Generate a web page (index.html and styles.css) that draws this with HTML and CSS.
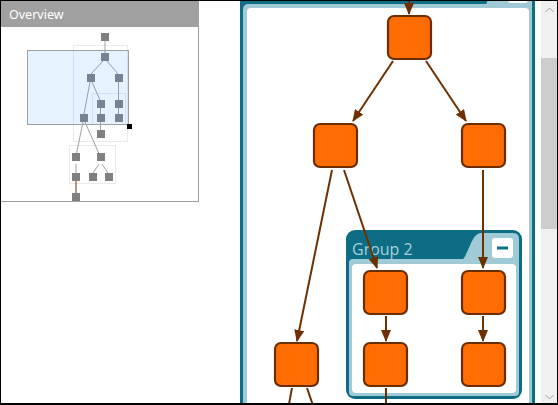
FILE: index.html
```html
<!DOCTYPE html>
<html>
<head>
<meta charset="utf-8">
<link rel="stylesheet" href="styles.css">
</head>
<body>
<div class="window">
  <div class="canvas">
    <svg class="diagram" viewBox="1 1 540 402" width="540" height="402">
      <defs>
        <marker id="arr" viewBox="0 0 12 10" refX="11" refY="5" markerWidth="12" markerHeight="10" markerUnits="userSpaceOnUse" orient="auto">
          <path d="M0,0 L12,5 L0,10 Z" fill="#6e3000"/>
        </marker>
      </defs>
      <!-- outer group -->
      <rect x="240" y="-40" width="295" height="480" rx="8" fill="#0d6d85"/>
      <rect x="243" y="4" width="289" height="440" rx="5" fill="#a0cad6"/>
      <polygon points="491,-10 532,-10 532,8 485,8" fill="#a0cad6"/>
      <rect x="247" y="8" width="282" height="430" rx="4" fill="#fff"/>
      <rect x="508" y="-20" width="20" height="23" rx="3" fill="#fff"/>
      <!-- group 2 -->
      <rect x="346" y="230" width="176" height="169" rx="9" fill="#0d6d85"/>
      <rect x="349" y="259" width="170" height="137" rx="4" fill="#a0cad6"/>
      <path d="M481,233 L513,233 Q519,233 519,239 L519,262 L458,262 C468,262 470,233 481,233 Z" fill="#a0cad6"/>
      <rect x="352" y="264" width="164" height="129" rx="4" fill="#fff"/>
      <text class="group-label" x="352" y="255">Group 2</text>
      <rect x="492" y="238" width="21" height="20" rx="3" fill="#fff"/>
      <line x1="497" y1="248" x2="508" y2="248" stroke="#0d6d85" stroke-width="3"/>
      <!-- edges -->
      <g stroke="#6e3000" stroke-width="2" fill="none">
        <path d="M409,-5 L409,14" marker-end="url(#arr)"/>
        <path d="M393,61 L353,121" marker-end="url(#arr)"/>
        <path d="M426,61 L466,121" marker-end="url(#arr)"/>
        <path d="M332,170 L297,341" marker-end="url(#arr)"/>
        <path d="M344,170 L377,268" marker-end="url(#arr)"/>
        <path d="M483,170 L483,268" marker-end="url(#arr)"/>
        <path d="M386,316 L386,341" marker-end="url(#arr)"/>
        <path d="M483,316 L483,341" marker-end="url(#arr)"/>
        <path d="M292,388 L286,420"/>
        <path d="M307,388 L318,420"/>
        <path d="M386,388 L386,420"/>
      </g>
      <!-- nodes -->
      <g fill="#ff6d00" stroke="#6b2e00" stroke-width="2.2">
        <rect x="388" y="16" width="43" height="43" rx="6"/>
        <rect x="314" y="124" width="43" height="43" rx="6"/>
        <rect x="462" y="124" width="43" height="43" rx="6"/>
        <rect x="364" y="271" width="43" height="43" rx="6"/>
        <rect x="462" y="271" width="43" height="43" rx="6"/>
        <rect x="364" y="343" width="43" height="43" rx="6"/>
        <rect x="462" y="343" width="43" height="43" rx="6"/>
        <rect x="275" y="343" width="43" height="43" rx="6"/>
      </g>
    </svg>
    <div class="overview">
      <div class="overview-title">Overview</div>
      <svg class="overview-map" viewBox="1 27 197 174" width="197" height="174">
        <g fill="none" stroke="#ebebeb" stroke-width="1">
          <rect x="73.5" y="45.5" width="54" height="96"/>
          <rect x="92.5" y="93.5" width="33" height="31"/>
          <rect x="69.5" y="145.5" width="46" height="38"/>
        </g>
        <g stroke="#a0a0a0" stroke-width="1" fill="none">
          <path d="M105,41 L105,53"/>
          <path d="M103,61 L91,74"/>
          <path d="M107,61 L118,74"/>
          <path d="M90,82 L84,114"/>
          <path d="M92,82 L100,100"/>
          <path d="M118.5,82 L118.5,100"/>
          <path d="M100.5,108 L100.5,114"/>
          <path d="M118.5,108 L118.5,114"/>
          <path d="M100.5,122 L100.5,130"/>
          <path d="M83,122 L76,156"/>
          <path d="M85,122 L100,156"/>
          <path d="M76,164 L76,173"/>
          <path d="M99,164 L93,173"/>
          <path d="M102,164 L108,173"/>
        </g>
        <path d="M76,181 L76,193" stroke="#6e3000" stroke-width="1"/>
        <g fill="#808080">
          <rect x="101" y="33" width="8" height="8"/>
          <rect x="101" y="53" width="8" height="8"/>
          <rect x="87" y="74" width="8" height="8"/>
          <rect x="115" y="74" width="8" height="8"/>
          <rect x="97" y="100" width="8" height="8"/>
          <rect x="115" y="100" width="8" height="8"/>
          <rect x="80" y="114" width="8" height="8"/>
          <rect x="97" y="114" width="8" height="8"/>
          <rect x="115" y="114" width="8" height="8"/>
          <rect x="97" y="130" width="8" height="8"/>
          <rect x="72" y="153" width="8" height="8"/>
          <rect x="97" y="153" width="8" height="8"/>
          <rect x="72" y="173" width="8" height="8"/>
          <rect x="89" y="173" width="8" height="8"/>
          <rect x="105" y="173" width="8" height="8"/>
          <rect x="72" y="193" width="8" height="8"/>
        </g>
        <rect x="27.5" y="50.5" width="101" height="74" fill="rgba(51,153,255,0.13)" stroke="#a0a0a0" stroke-width="1"/>
        <rect x="127" y="124" width="5" height="5" fill="#000"/>
      </svg>
    </div>
  </div>
  <div class="scrollbar">
    <div class="sb-btn">
      <svg width="9" height="6" viewBox="0 0 9 6"><polyline points="0.5,5 4.5,1 8.5,5" fill="none" stroke="#a3a3a3" stroke-width="1"/></svg>
    </div>
    <div class="sb-track"><div class="sb-thumb"></div></div>
    <div class="sb-btn sb-btn-bottom">
      <svg width="9" height="6" viewBox="0 0 9 6"><polyline points="0.5,1 4.5,5 8.5,1" fill="none" stroke="#a3a3a3" stroke-width="1"/></svg>
    </div>
  </div>
</div>
</body>
</html>
```
FILE: styles.css
```css
html, body {
  margin: 0;
  padding: 0;
  background: #fff;
}
.window {
  width: 558px;
  height: 405px;
  box-sizing: border-box;
  border: 1px solid #000;
  border-bottom-width: 2px;
  display: flex;
  background: #fff;
  overflow: hidden;
}
.canvas {
  flex: 1;
  position: relative;
  overflow: hidden;
}
.diagram {
  display: block;
}
.group-label {
  font-family: "Open Sans", "Noto Sans", sans-serif;
  font-size: 16px;
  fill: #a6d0dc;
}
.overview {
  position: absolute;
  left: 0;
  top: 0;
  width: 198px;
  height: 201px;
  box-sizing: border-box;
  border-right: 1px solid #a0a0a0;
  border-bottom: 1px solid #a0a0a0;
  background: #fff;
  display: flex;
  flex-direction: column;
}
.overview-title {
  height: 26px;
  box-sizing: border-box;
  padding-top: 2px;
  background: #a0a0a0;
  color: #fff;
  font-family: "Noto Sans", "Open Sans", sans-serif;
  font-size: 12.5px;
  line-height: 24px;
  padding-left: 8px;
}
.overview-map {
  display: block;
}
.scrollbar {
  width: 16px;
  display: flex;
  flex-direction: column;
  background: #f0f0f0;
}
.sb-btn {
  height: 17px;
  display: flex;
  align-items: center;
  justify-content: center;
}
.sb-btn-bottom {
  align-items: flex-end;
  padding-bottom: 3px;
  box-sizing: border-box;
}
.sb-track {
  flex: 1;
}
.sb-thumb {
  margin-top: 40px;
  height: 171px;
  background: #cdcdcd;
}
```
